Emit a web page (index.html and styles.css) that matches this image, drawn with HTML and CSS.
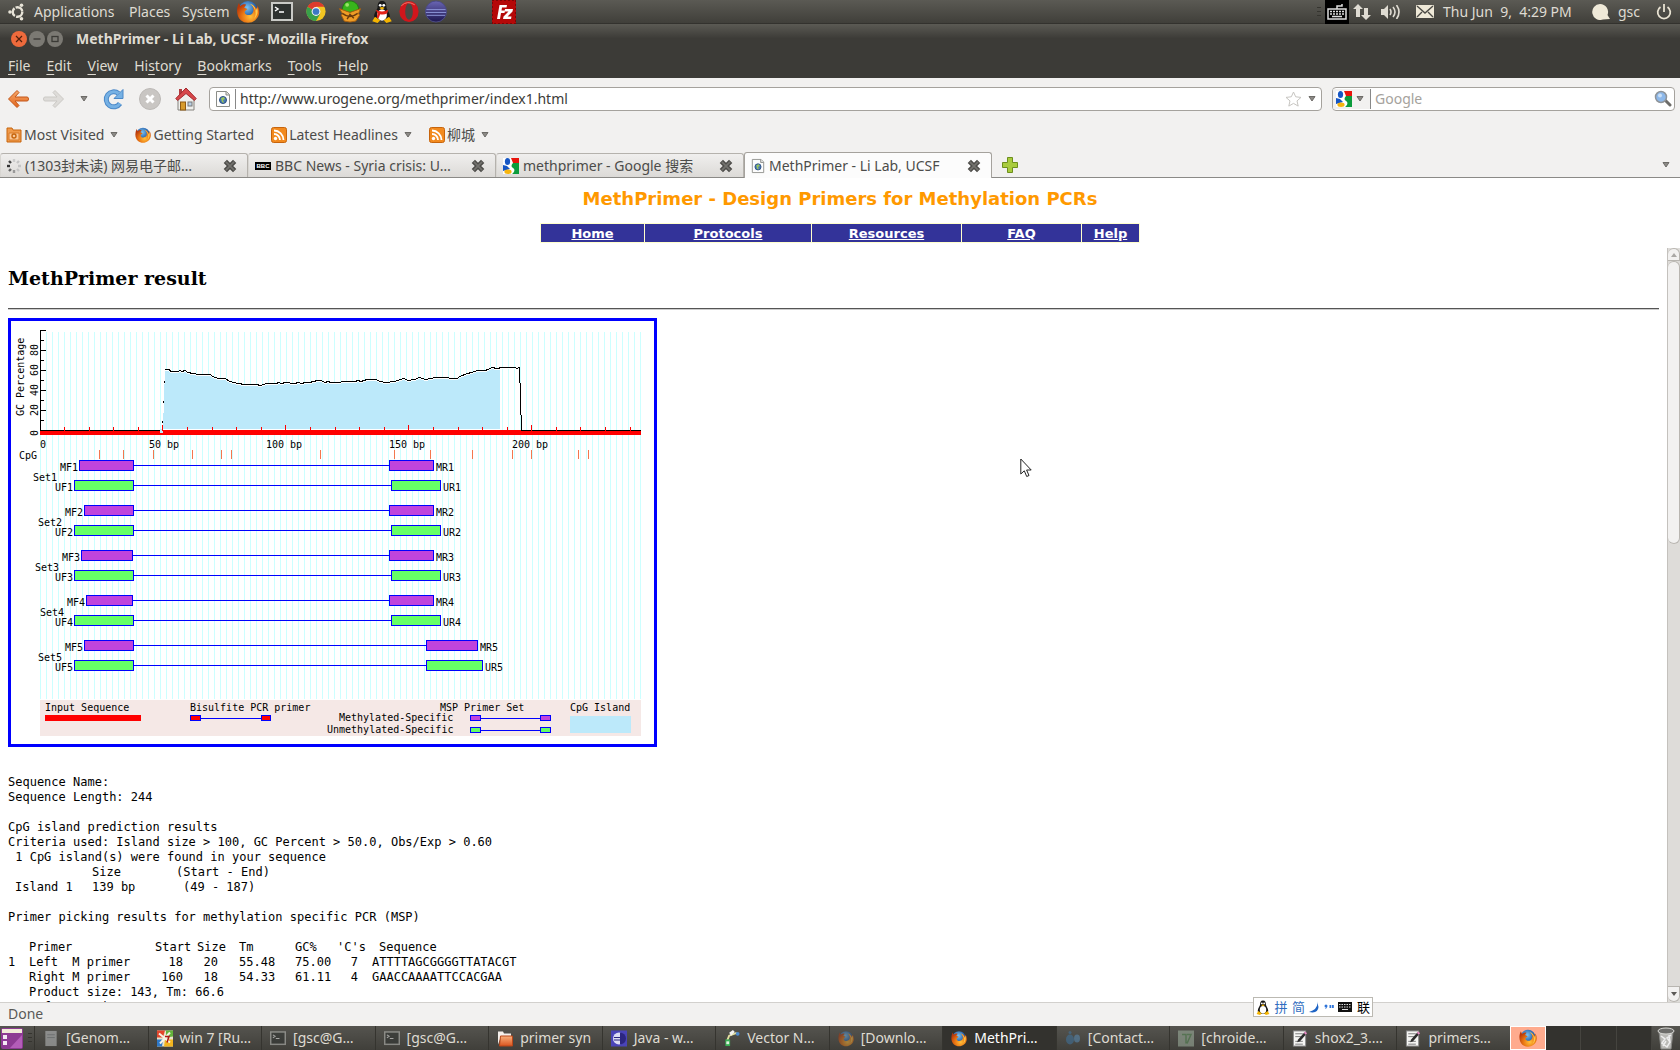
FILE: index.html
```html
<!DOCTYPE html>
<html lang="en">
<head>
<meta charset="utf-8">
<title>MethPrimer - Li Lab, UCSF</title>
<link rel="stylesheet" href="styles.css">
</head>
<body>
<svg class="defs" aria-hidden="true">
  <defs>
    <radialGradient id="gOrange" cx="60%" cy="70%" r="70%"><stop offset="0" stop-color="#ffc03a"/><stop offset=".5" stop-color="#ec7a14"/><stop offset="1" stop-color="#b8380a"/></radialGradient>
    <radialGradient id="gBlue" cx="45%" cy="35%" r="70%"><stop offset="0" stop-color="#7cc4f0"/><stop offset=".6" stop-color="#2a66b0"/><stop offset="1" stop-color="#122f68"/></radialGradient>
    <linearGradient id="gSphere" x1="0" y1="0" x2="0" y2="1"><stop offset="0" stop-color="#6a66b4"/><stop offset="1" stop-color="#1d1650"/></linearGradient>
    <linearGradient id="gArrow" x1="0" y1="0" x2="0" y2="1"><stop offset="0" stop-color="#f7a86a"/><stop offset="1" stop-color="#e2661c"/></linearGradient>
    <linearGradient id="gFolder" x1="0" y1="0" x2="0" y2="1"><stop offset="0" stop-color="#f9b07c"/><stop offset="1" stop-color="#d9541e"/></linearGradient>
    <pattern id="grid" x="29" y="0" width="6" height="6" patternUnits="userSpaceOnUse"><rect width="1" height="6" fill="#ccffff"/></pattern>
  </defs>
  <symbol id="firefox" viewBox="0 0 24 24">
    <circle cx="12" cy="11" r="10" fill="url(#gBlue)"/>
    <path d="M2.500 3l1.500 3.500C6 4.500 8 4 10 5L8 8l3.500 1.500c-1 1.500-3 1.500-3 3.500 1 3.500 6 3.500 8 1 2-2.500 1.500-6-1-9 3 1 5 3 5.500 5L22 6c3 6 2 11.500-2.500 15-4 3.500-11 3.500-15 0S-1 10 2.500 3z" fill="url(#gOrange)"/>
    <path d="M14 4c4 1 6 4 6 7.500l1.500-4C23 12 22 17 18 20c3-4 3-11-4-16z" fill="#ffc94a"/>
  </symbol>
  <symbol id="terminal" viewBox="0 0 22 20">
    <rect x="1" y="1" width="20" height="17" fill="#2e3230" stroke="#c9cac6" stroke-width="2"/>
    <path d="M4 5l3 2-3 2M8 10h5" fill="none" stroke="#fff" stroke-width="1.500"/>
  </symbol>
  <symbol id="eclipse" viewBox="0 0 24 24">
    <circle cx="12" cy="12" r="11" fill="url(#gSphere)" stroke="#4a4a86"/>
    <path d="M2 10h20M1.500 13h21M2.500 16h19" stroke="#8d97d8" stroke-width="1"/>
  </symbol>
  <symbol id="tux" viewBox="0 0 24 26">
    <path d="M12 1c-4 0-5 3-5 7 0 3-4 6-4 11 0 3 3 5 9 5s9-2 9-5c0-5-4-8-4-11 0-4-1-7-5-7z" fill="#181818"/>
    <ellipse cx="12" cy="17" rx="5.500" ry="6.500" fill="#fff"/>
    <circle cx="10" cy="6" r="1.600" fill="#fff"/><circle cx="14" cy="6" r="1.600" fill="#fff"/>
    <path d="M9 9q3-2 6 0l-3 2z" fill="#f4b400"/>
    <path d="M1 24l3-5 6 4-3 3zM23 24l-3-5-6 4 3 3z" fill="#f4b400"/>
  </symbol>
  <symbol id="globe-page" viewBox="0 0 16 18">
    <path d="M1.500 1.500h10l3 3v12h-13z" fill="#fdfdfd" stroke="#8b8d88"/>
    <path d="M11 1.500v3.500h3.500" fill="#ddd" stroke="#8b8d88"/>
    <circle cx="8" cy="10" r="3.500" fill="#4a7ab4" stroke="#2b4f82"/>
    <path d="M6 8l3-1 1 2-2 1 1 3-2-1z" fill="#9ac65a"/>
  </symbol>
  <symbol id="google" viewBox="0 0 16 16">
    <rect width="16" height="16" fill="#fff"/>
    <path d="M8 0h8v5h-6z" fill="#e8140c"/><path d="M10 5h6v11H9c3-2 3-5 1-6-2-1-2-3 0-5z" fill="#0c9c3c"/>
    <ellipse cx="4.500" cy="3.500" rx="2.600" ry="3.500" fill="#1656c4"/><path d="M0 7l4 1 3 3-7 2z" fill="#1656c4"/>
    <ellipse cx="5" cy="13.700" rx="3.600" ry="2.200" fill="#f6b40e"/>
  </symbol>
  <symbol id="feed" viewBox="0 0 16 16">
    <rect x=".5" y=".5" width="15" height="15" rx="2" fill="#f28a1e" stroke="#c7640c"/>
    <circle cx="4.500" cy="11.500" r="1.700" fill="#fff"/>
    <path d="M3 7a6 6 0 0 1 6 6M3 3.500A9.500 9.500 0 0 1 12.500 13" fill="none" stroke="#fff" stroke-width="1.800"/>
  </symbol>
  <symbol id="caret" viewBox="0 0 8 6"><path d="M1 .5h6L4 5z" fill="#8c8a86" stroke="#6d6b67"/></symbol>
  <symbol id="cross" viewBox="0 0 12 12"><path d="M2 2l8 8M10 2l-8 8" stroke="#4d4c49" stroke-width="4"/><path d="M2.500 2.500l7 7M9.500 2.500l-7 7" stroke="#73726e" stroke-width="1.500"/></symbol>
  <symbol id="folder" viewBox="0 0 16 16"><path d="M1 14V1h5l1 2h7v3H4z" fill="#f5f0ec"/><path d="M3.500 5.500h12v10H2.500z" fill="url(#gFolder)" stroke="#b8471a"/></symbol>
  <symbol id="notes" viewBox="0 0 16 18"><rect x="1" y="1" width="13" height="16" fill="#f5f5f3" stroke="#888"/><path d="M3 4h8M3 7h6M3 12h8M3 15h8" stroke="#777"/><path d="M5 13l1-3 7-8 2 2-7 8z" fill="#2c2c2c"/><path d="M12 3l1.500-1.500 2 2L14 5z" fill="#e68bc4"/></symbol>
</svg>

<header class="panel">
  <nav class="panel-menus">
    <svg class="ubuntu" viewBox="0 0 18 18"><circle cx="9.500" cy="9" r="4.800" fill="none" stroke="#e8e4d8" stroke-width="2.400" stroke-dasharray="8.800 1.250"/><circle cx="2" cy="9" r="1.800" fill="#e8e4d8"/><circle cx="13.500" cy="2.200" r="1.800" fill="#e8e4d8"/><circle cx="13.500" cy="15.800" r="1.800" fill="#e8e4d8"/></svg>
    <button class="pm pm-apps">Applications</button><button class="pm pm-places">Places</button><button class="pm">System</button>
  </nav>
  <div class="launchers">
    <svg class="l24"><use href="#firefox"/></svg>
    <svg class="l24 l-term"><use href="#terminal"/></svg>
    <svg class="l24" viewBox="0 0 24 24"><circle cx="12" cy="12" r="10" fill="#f2c521"/><path d="M12 12L3.300 7A10 10 0 0 0 12 22l4-7z" fill="#38a04a"/><path d="M3.300 7A10 10 0 0 1 20.700 7H12v5z" fill="#dd3b2c"/><circle cx="12" cy="12" r="4.600" fill="#f4f4f4"/><circle cx="12" cy="12" r="3.500" fill="#3b78c4"/></svg>
    <svg class="l24" viewBox="0 0 24 24"><path d="M4 11C4 4 8 1 12 1s9 3 9 9l-9 3z" fill="#38b51c" stroke="#1e7a10"/><path d="M1 9l11 4 11-4-2 5 1 2-4 6q-6 2-12 0l-3-6 1-2z" fill="#ee9c26" stroke="#a65f10"/><path d="M4 14c5 4 11 4 16 0M9 20l3-5 4 4" stroke="#6b3b0c" fill="none" stroke-width="1.500"/><circle cx="9" cy="5" r="2" fill="#9be36a"/></svg>
  </div>
  <div class="launchers tight">
    <svg class="l24" viewBox="0 0 24 26"><use href="#tux"/><path d="M5 11q7 4 14 0l-1 4q-4 2-8 1l-2 5-2-1 1-5z" fill="#e3231a"/></svg>
    <svg class="l24" viewBox="0 0 24 24"><ellipse cx="12" cy="12" rx="10" ry="11" fill="#d1161c"/><ellipse cx="12" cy="12" rx="4" ry="8.500" fill="#4a4944"/><path d="M4 6q6-6 14-1" stroke="#f57a6a" fill="none"/></svg>
    <svg class="l24"><use href="#eclipse"/></svg>
  </div>
  <svg class="filezilla" viewBox="0 0 24 24"><rect width="24" height="24" fill="#b50808"/><path d="M0 0h24v24H0z" fill="none" stroke="#7c0505" stroke-width="2" stroke-dasharray="2 2"/><path d="M5 19L7.500 5H15l-.5 2.500H10L9.500 10.500H13L12.500 13H9l-1 6zM13 9h8l-.5 2.500-5 5H19.500L19 19h-8l.5-2.500 5-5H12.500z" fill="#fff"/></svg>

  <div class="tray">
    <span class="grip"></span>
    <svg class="kbd" viewBox="0 0 24 24"><rect width="24" height="24" fill="#000"/><path d="M3 9h18v10H3zM12 9V6h5V4" fill="none" stroke="#ddd" stroke-width="1.500"/><path d="M5 11.500h14M5 14h14" stroke="#ddd" stroke-width="1.500" stroke-dasharray="2 1"/><path d="M7 16.500h10" stroke="#ddd" stroke-width="1.500"/></svg>
    <svg class="arrows" viewBox="0 0 18 16"><path d="M5 0l5 5H7v8H3V5H0zM13 16l-5-5h3V4h4v7h3z" fill="#dfdbd2"/></svg>
    <svg class="sound" viewBox="0 0 20 14"><path d="M0 4h3l4-4v14l-4-4H0z" fill="#dfdbd2"/><path d="M9 4q2 3 0 6M12 2q4 5 0 10M15.500 0q5 7 0 14" fill="none" stroke="#dfdbd2" stroke-width="1.600"/></svg>
    <svg class="mail" viewBox="0 0 18 13"><rect width="18" height="13" rx="1" fill="#efe9d8"/><path d="M1 1l8 7 8-7M1 12l5-5M17 12l-5-5" fill="none" stroke="#4b4a45" stroke-width="1.400"/></svg>
    <span class="clock">Thu Jun&nbsp; 9,&nbsp; 4:29 PM</span>
    <svg class="bubble" viewBox="0 0 18 16"><path d="M8 0a8 8 0 1 0 3 15.500L18 15l-2.500-4A8 8 0 0 0 8 0z" fill="#efe9d8"/></svg>
    <span class="user">gsc</span>
    <svg class="power" viewBox="0 0 16 16"><path d="M4.500 3A6.300 6.300 0 1 0 11.500 3M8 0v8" fill="none" stroke="#e8e2d2" stroke-width="1.800"/></svg>
  </div>
</header>

<div class="titlebar">
  <button class="wb wb-close" aria-label="Close"><svg viewBox="0 0 16 16"><path d="M5 5l6 6M11 5l-6 6" stroke="#50200c" stroke-width="1.200"/></svg></button>
  <button class="wb" aria-label="Minimize"><svg viewBox="0 0 16 16"><path d="M4.500 8h7" stroke="#3b3a36" stroke-width="1.400"/></svg></button>
  <button class="wb" aria-label="Maximize"><svg viewBox="0 0 16 16"><rect x="5" y="5.500" width="6" height="5" fill="none" stroke="#3b3a36" stroke-width="1.300"/></svg></button>
  <span class="wtitle">MethPrimer - Li Lab, UCSF - Mozilla Firefox</span>
</div>
<nav class="menubar">
  <button><u>F</u>ile</button><button><u>E</u>dit</button><button><u>V</u>iew</button><button>Hi<u>s</u>tory</button><button><u>B</u>ookmarks</button><button><u>T</u>ools</button><button><u>H</u>elp</button>
</nav>

<div class="toolbar">
  <button class="tb" aria-label="Back"><svg width="22" height="20" viewBox="0 0 22 20"><path d="M10 1.500L1.500 10l8.500 8.500 2-2L8 12h12q1.500 0 1.500-2T20 8H8l4-4.500z" fill="url(#gArrow)" stroke="#c4571a"/></svg></button>
  <button class="tb" aria-label="Forward"><svg width="22" height="20" viewBox="0 0 22 20"><path d="M12 1.500L20.500 10 12 18.500l-2-2 4-4.500H2Q.5 12 .5 10T2 8h12l-4-4.500z" fill="#dedcd9" stroke="#cbc9c5"/></svg></button>
  <button class="tb tb-small" aria-label="Recent pages"><svg width="8" height="6"><use href="#caret"/></svg></button>
  <button class="tb" aria-label="Reload"><svg width="22" height="22" viewBox="0 0 22 22"><path d="M17 15.500A7.500 7.500 0 1 1 15.500 5.500" fill="none" stroke="#4a88c8" stroke-width="5"/><path d="M20 1.500v9h-9z" fill="#76b1e4" stroke="#4a88c8"/><path d="M17 15.500A7.500 7.500 0 1 1 15.500 5.500" fill="none" stroke="#76b1e4" stroke-width="3"/></svg></button>
  <button class="tb" aria-label="Stop"><svg width="22" height="22" viewBox="0 0 22 22"><circle cx="11" cy="11" r="10.500" fill="#c9c6c3" stroke="#bcb9b6"/><path d="M7.500 7.500l7 7M14.500 7.500l-7 7" stroke="#fff" stroke-width="3"/></svg></button>
  <button class="tb" aria-label="Home"><svg width="22" height="24" viewBox="0 0 22 24"><path d="M3 12v11h16V12l-8-7z" fill="#efefec" stroke="#85837f"/><path d="M4 2h3v6H4z" fill="#b33c40"/><path d="M11 1L.8 11.500l1.800 2L11 6.500l8.400 7 1.800-2z" fill="#d8474a" stroke="#a32b30"/><rect x="5.500" y="15" width="5" height="8" fill="#d79b2c" stroke="#8f5a12"/><rect x="13" y="15" width="4" height="4" fill="#b9cfe4" stroke="#777"/></svg></button>
  <div class="field urlbar">
    <span class="favbox"><svg width="16" height="18"><use href="#globe-page"/></svg></span>
    <input type="text" aria-label="Address" value="http://www.urogene.org/methprimer/index1.html">
    <svg width="17" height="16" viewBox="0 0 17 16"><path d="M8.500 1l2.200 4.800 5.300.6-4 3.500 1.200 5.200-4.700-2.700-4.700 2.700L5 9.900 1 6.400l5.300-.6z" fill="#fff" stroke="#c6c4c0"/></svg>
    <svg class="url-caret" width="8" height="6"><use href="#caret"/></svg>
  </div>
  <div class="field searchbar">
    <span class="engine"><svg width="16" height="16"><use href="#google"/></svg><svg width="8" height="6"><use href="#caret"/></svg></span>
    <input type="text" aria-label="Search" placeholder="Google">
    <svg width="18" height="17" viewBox="0 0 18 17"><path d="M11 10l5 5" stroke="#6d6c69" stroke-width="3" stroke-linecap="round"/><circle cx="7" cy="7" r="5.500" fill="#8db8ea" stroke="#8f9499" stroke-width="1.500"/><circle cx="6" cy="5.500" r="2" fill="#c9dff7"/></svg>
  </div>
</div>

<div class="bookmarks">
  <a href="#"><svg width="16" height="16" viewBox="0 0 16 16"><path d="M1 15V1h5l1 2h8v12z" fill="#f09a4a" stroke="#c7640c"/><path d="M3 6h10v7H3z" fill="#f9c796" stroke="#d87a28"/><circle cx="8" cy="9" r="2" fill="none" stroke="#c7640c" stroke-width="1.400"/></svg>Most Visited<svg class="bm-caret"><use href="#caret"/></svg></a>
  <a href="#"><svg width="16" height="16"><use href="#firefox"/></svg>Getting Started</a>
  <a href="#"><svg width="16" height="16"><use href="#feed"/></svg>Latest Headlines<svg class="bm-caret"><use href="#caret"/></svg></a>
  <a href="#"><svg width="16" height="16"><use href="#feed"/></svg>柳城<svg class="bm-caret"><use href="#caret"/></svg></a>
</div>

<div class="tabs">
  <div class="tab"><svg width="14" height="14" viewBox="0 0 14 14"><g stroke-width="2.400" fill="none"><path d="M7 0v3" stroke="#ccc"/><path d="M2 2l2 2" stroke="#444"/><path d="M0 7h3" stroke="#333"/><path d="M2 12l2-2" stroke="#666"/><path d="M7 14v-3" stroke="#999"/><path d="M12 12l-2-2M14 7h-3M12 2l-2 2" stroke="#c4c4c4"/></g></svg><span>(1303封未读) 网易电子邮…</span><button aria-label="Close tab"><svg width="14" height="14"><use href="#cross"/></svg></button></div>
  <div class="tab"><i class="bbc">BBC</i><span>BBC News - Syria crisis: U…</span><button aria-label="Close tab"><svg width="14" height="14"><use href="#cross"/></svg></button></div>
  <div class="tab"><svg width="16" height="16"><use href="#google"/></svg><span>methprimer - Google 搜索</span><button aria-label="Close tab"><svg width="14" height="14"><use href="#cross"/></svg></button></div>
  <div class="tab active"><svg width="14" height="16"><use href="#globe-page"/></svg><span>MethPrimer - Li Lab, UCSF</span><button aria-label="Close tab"><svg width="14" height="14"><use href="#cross"/></svg></button></div>
  <button class="newtab" aria-label="New tab"><svg width="16" height="16" viewBox="0 0 16 16"><path d="M5.500.5h5v5h5v5h-5v5h-5v-5h-5v-5h5z" fill="#a9cc3e" stroke="#6d8f1d"/></svg></button>
  <button class="alltabs" aria-label="List all tabs"><svg width="8" height="6"><use href="#caret"/></svg></button>
</div>

<main class="page">
  <div class="banner">
    <h1>MethPrimer - Design Primers for Methylation PCRs</h1>
    <nav class="sitenav">
      <a class="n-home" href="#">Home</a><a class="n-prot" href="#">Protocols</a><a class="n-res" href="#">Resources</a><a class="n-faq" href="#">FAQ</a><a class="n-help" href="#">Help</a>
    </nav>
  </div>
  <div class="pane">
    <section class="result">
      <h2>MethPrimer result</h2>
      <hr>
      <svg class="chart" width="643" height="423" viewBox="0 0 643 423" shape-rendering="crispEdges">
        <rect x="29" y="11" width="601" height="367" fill="url(#grid)"/>
        <path d="M152 107L154 49L158 49L160 51L167 51L169 50L177 52L182 53L188 54L199 54L202 56L207 58L214 58L219 61L227 63L234 64L246 64L249 65L256 63L266 63L284 63L299 61L310 60L314 62L329 62L344 61L356 59L365 59L375 62L384 61L393 58L397 60L408 57L415 59L424 57L437 57L446 58L456 53L466 50L474 50L481 47L489 48V108H152z" fill="#bce9fa"/>
        <g class="curve">
          <path id="gc" d="M154 48.500H158L160 50.500H167L169 49.500L171 50.500L174 49.500L177 51.500L182 52.500L188 53.500H199L202 55.500L207 57.500H214L219 60.500L227 62.500L234 63.500H246L249 64.500L256 62.500H266L267 61.500L271 62.500L274 61.500L284 62.500L287 61.500L291 62.500L294 61.500H299L302 60.500L307 59.500H310L314 61.500L317 60.500L320 61.500H329L331 60.500H344L347 59.500L350 60.500L356 58.500H365L369 60.500L375 61.500L384 60.500L389 58.500L393 57.500L397 59.500L404 58.500L408 56.500L415 58.500L424 56.500H437L439 57.500H446L449 55.500L456 52.500L461 51.500L466 49.500H474L477 48.500L481 46.500L486 47.500L491 46.500H504L506 47.500L508 46.500" />
        </g>
        <use href="#gc" y="1" class="curve-shadow"/>
        <use href="#gc" class="curve"/>
        <path d="M508.500 46V62M509.500 62V94M510.500 94V109" stroke="#000"/>
        <path d="M151 100h1v2h-1zM152 80h1v2h-1zM153 60h1v2h-1z" fill="#000"/>
        <rect x="152" y="108" width="337" height="1" fill="#fff"/>
        <rect x="29" y="109" width="601" height="5" fill="#f00"/>
        <rect x="149" y="108" width="3" height="4" fill="#bce9fa"/>
        <path d="M29 109.500H149M510 109.500H630" stroke="#000"/>
        <path d="M53.500 106v4M78.500 106v4M102.500 106v4M127.500 106v4M151.500 104v6M176.500 106v4M201.500 106v4M225.500 106v4M250.500 106v4M274.500 104v6M299.500 106v4M324.500 106v4M348.500 106v4M373.500 106v4M397.500 104v6M422.500 106v4M447.500 106v4M471.500 106v4M496.500 106v4M520.500 104v6M545.500 106v4M569.500 106v4M594.500 106v4M619.500 106v4" stroke="#f00"/>
        <path d="M29.500 9V110M29 9.500h6M29 19.500h4M29 29.500h6M29 39.500h4M29 49.500h6M29 59.500h4M29 69.500h6M29 79.500h4M29 89.500h6M29 99.500h4" stroke="#000"/>
        <path d="M88.500 129v9M112.500 129v9M142.500 129v9M181.500 129v9M210.500 129v9M220.500 129v9M309.500 129v9M383.500 129v9M419.500 129v9M461.500 129v9M501.500 129v9M520.500 129v9M567.500 129v9M577.500 129v9" stroke="#f4774e"/>
        <g class="ctext">
          <text transform="translate(13 95) rotate(-90)">GC Percentage</text>
          <text transform="translate(27 115) rotate(-90)">0</text><text transform="translate(27 95) rotate(-90)">20</text><text transform="translate(27 75) rotate(-90)">40</text><text transform="translate(27 55) rotate(-90)">60</text><text transform="translate(27 35) rotate(-90)">80</text>
          <text x="29" y="127">0</text><text x="138" y="127">50 bp</text><text x="255" y="127">100 bp</text><text x="378" y="127">150 bp</text><text x="501" y="127">200 bp</text>
          <text x="8" y="138">CpG</text>
        </g>
        <path class="link" d="M122 144.500H378M122 164.500H380M122 189.500H378M122 209.500H380M122 234.500H378M122 254.500H380M122 279.500H378M122 299.500H380M122 324.500H415M122 344.500H415"/>
        <g class="meth">
          <rect x="68.500" y="139.500" width="54" height="10"/><rect x="378.500" y="139.500" width="44" height="10"/>
          <rect x="73.500" y="184.500" width="49" height="10"/><rect x="378.500" y="184.500" width="44" height="10"/>
          <rect x="70.500" y="229.500" width="51" height="10"/><rect x="378.500" y="229.500" width="44" height="10"/>
          <rect x="75.500" y="274.500" width="46" height="10"/><rect x="378.500" y="274.500" width="44" height="10"/>
          <rect x="73.500" y="319.500" width="49" height="10"/><rect x="415.500" y="319.500" width="51" height="10"/>
        </g>
        <g class="unmeth">
          <rect x="63.500" y="159.500" width="59" height="10"/><rect x="380.500" y="159.500" width="49" height="10"/>
          <rect x="63.500" y="204.500" width="59" height="10"/><rect x="380.500" y="204.500" width="49" height="10"/>
          <rect x="63.500" y="249.500" width="59" height="10"/><rect x="380.500" y="249.500" width="49" height="10"/>
          <rect x="63.500" y="294.500" width="59" height="10"/><rect x="380.500" y="294.500" width="49" height="10"/>
          <rect x="63.500" y="339.500" width="59" height="10"/><rect x="415.500" y="339.500" width="56" height="10"/>
        </g>
        <g class="ctext">
          <text x="49" y="150">MF1</text><text x="22" y="160">Set1</text><text x="44" y="170">UF1</text><text x="425" y="150">MR1</text><text x="432" y="170">UR1</text>
          <text x="54" y="195">MF2</text><text x="27" y="205">Set2</text><text x="44" y="215">UF2</text><text x="425" y="195">MR2</text><text x="432" y="215">UR2</text>
          <text x="51" y="240">MF3</text><text x="24" y="250">Set3</text><text x="44" y="260">UF3</text><text x="425" y="240">MR3</text><text x="432" y="260">UR3</text>
          <text x="56" y="285">MF4</text><text x="29" y="295">Set4</text><text x="44" y="305">UF4</text><text x="425" y="285">MR4</text><text x="432" y="305">UR4</text>
          <text x="54" y="330">MF5</text><text x="27" y="340">Set5</text><text x="44" y="350">UF5</text><text x="469" y="330">MR5</text><text x="474" y="350">UR5</text>
        </g>
        <rect x="29" y="379" width="601" height="36" fill="#f5e8e6"/>
        <rect x="34" y="394" width="96" height="6" fill="#f00"/>
        <rect x="559" y="395" width="61" height="17" fill="#bce9fa"/>
        <path class="link" d="M190 397.500H250M470 397.500H530M470 409.500H530"/>
        <g class="bisulf"><rect x="179.500" y="394.500" width="10" height="5"/><rect x="250.500" y="394.500" width="9" height="5"/></g>
        <g class="meth"><rect x="459.500" y="394.500" width="10" height="5"/><rect x="529.500" y="394.500" width="10" height="5"/></g>
        <g class="unmeth"><rect x="459.500" y="406.500" width="10" height="5"/><rect x="529.500" y="406.500" width="10" height="5"/></g>
        <g class="ctext">
          <text x="34" y="390">Input Sequence</text><text x="179" y="390">Bisulfite PCR primer</text><text x="429" y="390">MSP Primer Set</text><text x="559" y="390">CpG Island</text>
          <text x="328" y="400">Methylated-Specific</text><text x="316" y="412">Unmethylated-Specific</text>
        </g>
      </svg>
      <div class="report">
        <pre>Sequence Name:
Sequence Length: 244

CpG island prediction results
Criteria used: Island size &gt; 100, GC Percent &gt; 50.0, Obs/Exp &gt; 0.60
 1 CpG island(s) were found in your sequence</pre>
        <table class="islands">
          <tr><th></th><th>Size</th><th>(Start - End)</th></tr>
          <tr><td class="in">Island 1</td><td>139 bp</td><td class="in">(49 - 187)</td></tr>
        </table>
        <p>Primer picking results for methylation specific PCR (MSP)</p>
        <table class="primers">
          <tr><th class="c-no"></th><th class="c-name">Primer</th><th class="c-start">Start</th><th class="c-size">Size</th><th class="c-tm">Tm</th><th class="c-gc">GC%</th><th class="c-cs">'C's</th><th class="c-seq">Sequence</th></tr>
          <tr><td>1</td><td>Left  M primer</td><td class="num">18</td><td class="num wide">20</td><td>55.48</td><td>75.00</td><td class="num">7</td><td>ATTTTAGCGGGGTTATACGT</td></tr>
          <tr><td></td><td>Right M primer</td><td class="num">160</td><td class="num wide">18</td><td>54.33</td><td>61.11</td><td class="num">4</td><td>GAACCAAAATTCCACGAA</td></tr>
          <tr><td></td><td colspan="7">Product size: 143, Tm: 66.6</td></tr>
          <tr><td></td><td colspan="7">Left  U primer</td></tr>
        </table>
      </div>
    </section>
    <div class="scroll">
      <span class="sc-up"><svg width="6" height="4" viewBox="0 0 6 4"><path d="M0 4h6L3 0z" fill="#aaa8a5"/></svg></span>
      <span class="sc-thumb"></span>
      <span class="sc-down"><svg width="6" height="4" viewBox="0 0 6 4"><path d="M0 0h6L3 4z" fill="#5b5956"/></svg></span>
    </div>
  </div>
</main>

<div class="status">Done
  <div class="ime">
    <svg width="14" height="17"><use href="#tux"/></svg><b>拼</b><b>简</b>
    <svg width="10" height="12" viewBox="0 0 10 12"><path d="M8 0q2 8-8 11 9 2 9.500-5z" fill="#1d63c4"/></svg>
    <svg width="10" height="6" viewBox="0 0 10 6"><circle cx="2" cy="2" r="1.500" fill="#2f74d8"/><path d="M3 2q0 3-2 3M5.500 1h1.800v3H5.500zM8 1h1.800v3H8z" fill="#2f74d8" stroke="none"/></svg>
    <svg width="14" height="10" viewBox="0 0 14 10"><rect width="14" height="10" fill="#111"/><path d="M1 2.500h12M1 5h12" stroke="#ddd" stroke-dasharray="1.500 1"/><path d="M4 7.500h6" stroke="#ddd"/></svg>
    <b class="k">联</b>
  </div>
</div>

<footer class="taskbar">
  <svg class="desk" viewBox="0 0 24 24"><rect x="1" y="2" width="22" height="21" rx="2" fill="#8d3a93"/><rect x="2" y="3" width="20" height="4" fill="#f0ead8"/><rect x="3" y="9" width="4" height="4" fill="#f4e9f4"/><rect x="3" y="15" width="4" height="4" fill="#f4e9f4"/><path d="M10 22L22 9v13z" fill="#b35db8"/></svg>
  <span class="grip"></span>
  <button class="task dim"><svg viewBox="0 0 16 18"><rect x="2" y="1" width="12" height="16" fill="#c9ccce"/><path d="M4 5h8M4 8h8" stroke="#8d949a"/></svg>[Genom…</button>
  <button class="task"><svg viewBox="0 0 16 16"><rect width="16" height="16" fill="#e9e2c8"/><path d="M0 0h8L6 7H0z" fill="#e3452b"/><path d="M9 0h7v6L9 7z" fill="#62b23a"/><path d="M0 9h6l-1 7H0z" fill="#2e78c8"/><path d="M8 9h8v7H7z" fill="#f2b51f"/><path d="M2 3l11 9M13 2L3 13" stroke="#f6f2e4" stroke-width="2"/><path d="M8 6h4l-2 6" fill="none" stroke="#b01818" stroke-width="1.500"/></svg>win 7 [Ru…</button>
  <button class="task dim"><svg><use href="#terminal"/></svg>[gsc@G…</button>
  <button class="task dim"><svg><use href="#terminal"/></svg>[gsc@G…</button>
  <button class="task"><svg><use href="#folder"/></svg>primer syn</button>
  <button class="task"><svg viewBox="0 0 16 16"><rect width="16" height="16" fill="#4a44b8"/><circle cx="8" cy="8" r="6" fill="#dcdcf4"/><path d="M9 2a6 6 0 1 1 0 12z" fill="#2c2680"/><path d="M3 7h10M3 9.500h10" stroke="#2c2680"/></svg>Java - w…</button>
  <button class="task"><svg viewBox="0 0 16 18"><path d="M3 11l2-5 8-3" fill="none" stroke="#e4e0a0" stroke-width="2"/><path d="M1 10h5v7H1z" fill="#39b054"/><path d="M2 12h3v3H2z" fill="#dff0e0"/><circle cx="14" cy="4" r="2" fill="#4a8ad0"/><path d="M5 3l4-3 2 2-4 4z" fill="#f2f2f2"/></svg>Vector N…</button>
  <button class="task dim"><svg><use href="#firefox"/></svg>[Downlo…</button>
  <button class="task current"><svg><use href="#firefox"/></svg>MethPri…</button>
  <button class="task dim"><svg viewBox="0 0 16 16"><ellipse cx="5" cy="9" rx="4" ry="5" fill="#3f78a8"/><ellipse cx="12" cy="8" rx="3" ry="4" fill="#5a93c2"/><circle cx="5" cy="2" r="1.500" fill="#3f78a8"/></svg>[Contact…</button>
  <button class="task dim"><svg viewBox="0 0 16 16"><rect width="16" height="16" fill="#a9bda9"/><path d="M4 4h4v9M9 4h4l-4 9" stroke="#5f9a5f" fill="none" stroke-width="1.500"/></svg>[chroide…</button>
  <button class="task"><svg><use href="#notes"/></svg>shox2_3.…</button>
  <button class="task"><svg><use href="#notes"/></svg>primers…</button>
  <div class="spaces"><span class="here"><svg width="18" height="18"><use href="#firefox"/></svg></span><span></span><span></span><span></span></div>
  <svg class="trash" viewBox="0 0 20 24"><path d="M3 6l2 17h10l2-17z" fill="#b9b9b5" stroke="#858582"/><ellipse cx="10" cy="5" rx="8" ry="3" fill="#6c6c69" stroke="#d8d8d4"/><path d="M5 10l4 3-3 4 5 4 3-5-3-4 4-3M7 20l3-5M13 9l1 8" stroke="#eee" fill="none" stroke-width="1.500"/></svg>
</footer>

<svg class="pointer" viewBox="0 0 12 20"><path d="M.8 1v15l3.500-3.200 2.400 5.700 2.300-1-2.400-5.500h4.600z" fill="#fff" stroke="#222"/></svg>
</body>
</html>
```

FILE: styles.css
```css
* { box-sizing: border-box; }
html, body { height: 100%; margin: 0; }
body {
  display: flex;
  flex-direction: column;
  position: relative;
  overflow: hidden;
  background: #fff;
  font: 14px/20px "Noto Sans", "Noto Sans CJK SC", sans-serif;
  color: #3c3b37;
}
svg { display: block; flex: none; }
button {
  border: 0;
  padding: 0;
  background: none;
  font: inherit;
  color: inherit;
  flex: none;
}
.defs { position: absolute; width: 0; height: 0; }

/* desktop panel */
.panel {
  display: flex;
  align-items: center;
  height: 24px;
  flex: none;
  color: #dfdbd2;
  background: linear-gradient(#5b5a54, #403f3a);
  border-bottom: 1px solid #33322e;
}
.panel-menus { display: flex; align-items: center; width: 236px; padding-left: 8px; }
.ubuntu { width: 18px; height: 18px; margin-right: 8px; }
.pm-apps { width: 95px; text-align: left; }
.pm-places { width: 53px; text-align: left; }
.launchers { display: flex; align-items: center; gap: 10px; }
.launchers.tight { gap: 3px; margin-left: 8px; }
.l24 { width: 24px; height: 23px; }
.l-term { height: 20px; }
.filezilla { width: 24px; height: 24px; margin-left: 44px; }
.tray { display: flex; align-items: center; margin-left: auto; padding-right: 8px; }
.grip {
  width: 4px;
  height: 10px;
  flex: none;
  background: repeating-linear-gradient(#35342f 0 1px, transparent 1px 4px);
}
.kbd { width: 24px; height: 24px; margin-left: 4px; }
.arrows { width: 18px; height: 16px; margin-left: 4px; }
.sound { width: 20px; height: 14px; margin-left: 10px; }
.mail { width: 18px; height: 13px; margin-left: 15px; }
.clock { width: 127px; margin-left: 9px; white-space: nowrap; }
.bubble { width: 18px; height: 16px; margin-left: 22px; }
.user { width: 22px; margin-left: 8px; }
.power { width: 16px; height: 16px; margin-left: 16px; }

/* window frame */
.titlebar {
  display: flex;
  align-items: center;
  gap: 2px;
  height: 29px;
  flex: none;
  padding-left: 11px;
  color: #dfdbd2;
  font-weight: 700;
  background: linear-gradient(#5b5a54, #3c3b37 50%);
}
.wb { width: 16px; height: 16px; border-radius: 50%; background: #7b7973; }
.wb-close { background: #ee6a3c; }
.wtitle { margin-left: 11px; }
.menubar {
  display: flex;
  align-items: center;
  gap: 16px;
  height: 25px;
  flex: none;
  padding-left: 8px;
  color: #dfdbd2;
  background: #3c3b37;
}
.menubar u { text-underline-offset: 3px; }

/* navigation toolbar */
.toolbar { display: flex; align-items: center; height: 40px; flex: none; background: #f2f1f0; padding: 1px 5px 0 0; }
.tb { width: 36px; height: 36px; display: flex; align-items: center; justify-content: center; }
.tb-small { width: 24px; }
.field {
  display: flex;
  align-items: center;
  height: 24px;
  border: 1px solid #a5a29d;
  border-radius: 4px;
  background: #fff;
  overflow: hidden;
}
.field input {
  flex: 1;
  min-width: 0;
  border: 0;
  padding: 0;
  outline: 0;
  background: none;
  font: inherit;
  color: #3c3b37;
}
.field input::placeholder { color: #a5a29d; opacity: 1; }
.urlbar { flex: 1; margin-left: 5px; padding-right: 5px; }
.favbox { display: flex; align-items: center; height: 20px; padding: 0 4px 0 5px; margin-right: 4px; border-right: 1px solid #888; }
.url-caret { margin-left: 6px; }
.searchbar { width: 343px; margin-left: 10px; padding-right: 2px; }
.engine { display: flex; align-items: center; gap: 4px; height: 20px; padding: 0 6px 0 3px; margin-right: 4px; border-right: 1px solid #888; background: #f2f1f0; }

.bookmarks { display: flex; align-items: center; height: 34px; flex: none; padding-left: 6px; gap: 17px; background: #f2f1f0; }
.bookmarks a { display: flex; align-items: center; gap: 2px; color: #4c4c4a; text-decoration: none; white-space: nowrap; }
.bm-caret { width: 8px; height: 6px; margin-left: 4px; }

/* tab strip */
.tabs { display: flex; align-items: flex-end; height: 26px; flex: none; background: #f2f1f0; border-bottom: 1px solid #8b8a87; }
.tab {
  display: flex;
  align-items: center;
  width: 248px;
  height: 24px;
  padding: 1px 10px 0 6px;
  border: 1px solid #b5b2ad;
  border-left-color: #d8d6d2;
  border-bottom: 0;
  border-radius: 3px 3px 0 0;
  background: linear-gradient(#f0efee, #dcdad7);
  color: #4c4c4a;
}
.tab span { flex: 1; margin-left: 4px; white-space: nowrap; overflow: hidden; }
.tab.active { height: 26px; margin-bottom: -1px; padding-top: 0; background: #fcfcfc; border-color: #a5a29d; }
.bbc { width: 16px; height: 8px; background: #000; color: #fff; font: 700 6px/8px "Liberation Sans", sans-serif; text-align: center; }
.newtab { align-self: center; margin-left: 10px; }
.alltabs { align-self: center; margin: 0 10px 0 auto; }

/* web page */
.page { display: flex; flex-direction: column; flex: 1; min-height: 0; }
.banner { flex: none; height: 70px; text-align: center; }
.banner h1 { margin: 0; padding: 10px 0 13px; font: 700 18px/22px "DejaVu Sans", sans-serif; color: #f90; }
.sitenav { display: flex; gap: 1px; width: 600px; margin: 0 auto; padding: 1px; background: #ffc; }
.sitenav a { height: 18px; background: #339; color: #fff; font: 700 13px/19px "DejaVu Sans", sans-serif; }
.n-home { width: 103px; }
.n-prot { width: 166px; }
.n-res { width: 149px; }
.n-faq { width: 119px; }
.n-help { width: 57px; }
.pane { display: flex; flex: 1; min-height: 0; }
.result { flex: 1; min-width: 0; overflow: hidden; padding: 0 8px; color: #000; }
.result h2 { margin: 18px 0; font: 700 19px/24px "DejaVu Serif", serif; }
.result hr { margin: 0 0 8px; height: 2px; border: 0; background: #555; border-bottom: 1px solid #ccc; }
.chart { box-sizing: content-box; border: 3px solid #00f; background: #fff; }
.curve { fill: none; stroke: #000; }
.curve-shadow { fill: none; stroke: #fff; }
.link { fill: none; stroke: #00f; }
.meth rect { fill: #c044dc; stroke: #00f; }
.unmeth rect { fill: #66ff66; stroke: #00f; }
.bisulf rect { fill: #f00; stroke: #00f; }
.ctext { font: 10px "DejaVu Sans Mono", monospace; fill: #000; }
.report { padding-top: 28px; font: 12px/15px "DejaVu Sans Mono", monospace; }
.report pre, .report p { margin: 0; font: inherit; }
.report p { padding: 15px 0; }
.report table { border-collapse: collapse; table-layout: fixed; }
.report tr { height: 15px; }
.report th, .report td { padding: 0; font-weight: 400; text-align: left; white-space: pre; }
.islands { width: 300px; }
.islands th { width: 84px; }
.islands th:last-child { width: 132px; }
.report .islands .in { padding-left: 7px; }
.primers { width: 560px; }
.c-no { width: 21px; }
.c-name { width: 126px; }
.c-start, .c-size, .c-gc { width: 42px; }
.c-tm { width: 56px; }
.c-cs { width: 35px; }
.report .primers .c-seq { padding-left: 7px; }
.report .primers .num { text-align: right; padding-right: 14px; }
.report .primers .wide { padding-right: 21px; }

.scroll { display: flex; flex-direction: column; width: 13px; flex: none; border-left: 1px solid #c4c1bd; background: #dedcd9; }
.scroll span { display: flex; align-items: center; justify-content: center; border: 1px solid #b8b5b0; border-left: 0; background: #f2f1f0; }
.sc-up { height: 13px; border-radius: 6px 6px 0 0; }
.sc-thumb { height: 283px; border-radius: 6px; }
.sc-down { height: 16px; margin-top: auto; border-radius: 0 0 6px 6px; }

/* status bar */
.status { position: relative; height: 24px; flex: none; padding: 1px 8px; border-top: 1px solid #d2d0cd; background: #f2f1f0; color: #5a5957; }
.ime {
  position: absolute;
  right: 307px;
  top: -6px;
  display: flex;
  align-items: center;
  justify-content: space-between;
  width: 120px;
  height: 20px;
  padding: 0 2px;
  border: 1px solid #bbb9b2;
  background: #fff;
}
.ime b { font: 400 13px/18px "Noto Sans CJK SC", sans-serif; color: #2f6cc0; }
.ime .k { color: #000; }

/* window list */
.taskbar { display: flex; align-items: center; height: 24px; flex: none; background: linear-gradient(#55544f, #403f3a); color: #dfdbd2; }
.desk { width: 24px; height: 24px; margin-right: 4px; }
.taskbar .grip { margin-right: 2px; }
.task { display: flex; align-items: center; flex: 1 1 0; min-width: 0; height: 24px; padding-left: 8px; border-left: 1px solid #35342f; white-space: nowrap; }
.task svg { width: 16px; height: 17px; margin-right: 7px; }
.task.dim svg { opacity: .5; }
.task.current { background: #33322e; color: #fff; }
.spaces { display: flex; width: 142px; height: 24px; flex: none; background: #33322e; }
.spaces span { display: flex; align-items: center; justify-content: center; flex: 1; border-right: 1px solid #45443f; }
.spaces .here { border: 1px solid #fff; background: #ffab8e; }
.trash { width: 20px; height: 24px; margin: 0 4px; }

.pointer { position: absolute; left: 1020px; top: 458px; width: 12px; height: 20px; }
```
